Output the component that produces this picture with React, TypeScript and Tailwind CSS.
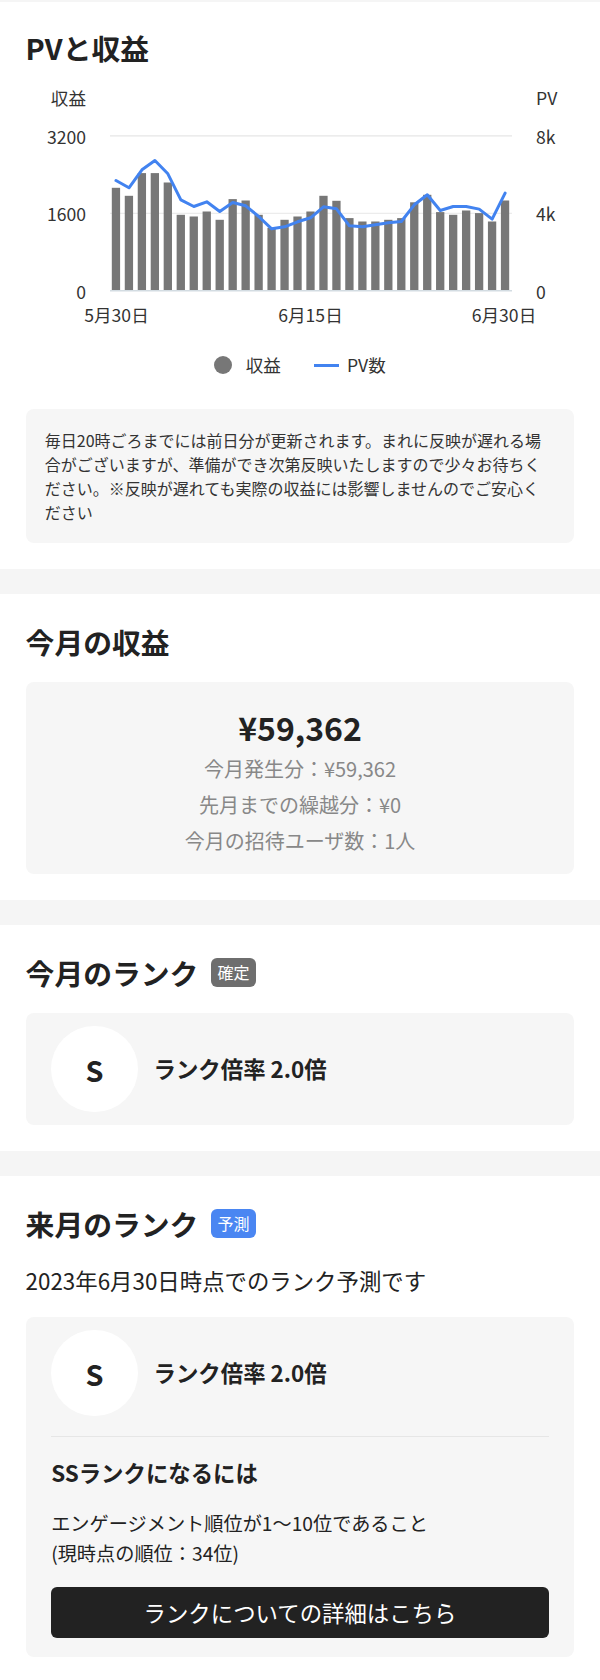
import React from "react";

const bars = [188, 196, 173.3, 173.3, 182.7, 215, 216.7, 211.7, 220, 199.3, 200.7, 215, 228, 220, 216.7, 211.7, 196, 201, 218.3, 221.7, 221.7, 220, 218.3, 202.5, 195, 212.3, 215, 210.7, 213.3, 221.7, 200.7];
const pv = [180.7, 188, 170, 160.7, 174, 200, 206.7, 202, 211.7, 202.7, 206, 216.7, 229, 227, 222, 218, 207, 209, 226, 227, 225, 223, 221.7, 205, 195, 210.7, 206.7, 206.7, 209.3, 219.3, 193.3];

const STEP = 12.97;
const X0 = 116;
const BASE = 290.5;

function Chart() {
  const pts = pv.map((y, i) => `${(X0 + i * STEP).toFixed(2)},${y}`).join(" ");
  return (
    <svg className="block w-[600px] h-[266px] -mx-[25.6px]" viewBox="0 69.2 600 266">
      <g fontSize="17.6" fill="#333">
        <text x="86" y="98" textAnchor="end" dominantBaseline="central">収益</text>
        <text x="536" y="98" textAnchor="start" dominantBaseline="central">PV</text>
        <text x="86" y="137" textAnchor="end" dominantBaseline="central">3200</text>
        <text x="86" y="214" textAnchor="end" dominantBaseline="central">1600</text>
        <text x="86" y="292" textAnchor="end" dominantBaseline="central">0</text>
        <text x="536" y="137" textAnchor="start" dominantBaseline="central">8k</text>
        <text x="536" y="214" textAnchor="start" dominantBaseline="central">4k</text>
        <text x="536" y="292" textAnchor="start" dominantBaseline="central">0</text>
        <text x="116.5" y="314.5" textAnchor="middle" dominantBaseline="central">5月30日</text>
        <text x="310.5" y="314.5" textAnchor="middle" dominantBaseline="central">6月15日</text>
        <text x="504" y="314.5" textAnchor="middle" dominantBaseline="central">6月30日</text>
      </g>
      <line x1="110" x2="512" y1="136" y2="136" stroke="#e6e6e6" strokeWidth="1.2" />
      <line x1="110" x2="512" y1="213.5" y2="213.5" stroke="#ececec" strokeWidth="1.2" />
      {bars.map((top, i) => (
        <rect key={i} x={111.8 + i * STEP} y={top} width="8.3" height={BASE - top} fill="#777777" />
      ))}
      <line x1="110" x2="512" y1="291" y2="291" stroke="#d3dce2" strokeWidth="1.4" />
      <polyline points={pts} fill="none" stroke="#4283f0" strokeWidth="3" strokeLinejoin="round" strokeLinecap="round" />
    </svg>
  );
}

function Band() {
  return <div className="h-[25.6px] bg-[#f5f5f5]" />;
}

function RankRow() {
  return (
    <div className="flex items-center">
      <div className="w-[86.4px] h-[86.4px] rounded-full bg-white flex items-center justify-center text-[28.8px] font-bold text-[#222]">
        S
      </div>
      <div className="ml-[16px] text-[22.4px] font-bold text-[#222]">ランク倍率 2.0倍</div>
    </div>
  );
}

export default function App() {
  return (
    <div className="w-[600px] bg-white text-[#222] font-['Noto_Sans_CJK_JP',sans-serif]">
      <div className="h-[2px] bg-[#f5f5f5]" />
      {/* Section 1 */}
      <section className="px-[25.6px] pt-[24px] pb-[25.6px]">
        <h2 className="text-[28.8px] leading-[43.2px] font-bold">PVと収益</h2>
        <Chart />
        <div className="mt-[17px] h-[26px] flex items-center justify-center text-[17.6px] text-[#333]">
          <span className="w-[17.6px] h-[17.6px] rounded-full bg-[#777777]" />
          <span className="ml-[14px]">収益</span>
          <span className="ml-[33px] w-[25px] h-[3px] bg-[#4283f0]" />
          <span className="ml-[8px]">PV数</span>
        </div>
        <div className="mt-[30.4px] bg-[#f6f6f6] rounded-[8px] pt-[19.2px] pb-[19.2px] pl-[19.2px] pr-[28px] text-[16px] leading-[24px] text-[#333]">
          毎日20時ごろまでには前日分が更新されます。まれに反映が遅れる場合がございますが、準備ができ次第反映いたしますので少々お待ちください。※反映が遅れても実際の収益には影響しませんのでご安心ください
        </div>
      </section>
      <Band />
      {/* Section 2 */}
      <section className="px-[25.6px] pt-[25.6px] pb-[25.6px]">
        <h2 className="text-[28.8px] leading-[43.2px] font-bold">今月の収益</h2>
        <div className="mt-[19.2px] bg-[#f6f6f6] rounded-[8px] pt-[26px] pb-[15px] text-center">
          <div className="text-[32px] leading-[38px] font-bold text-[#222]">¥59,362</div>
          <div className="mt-[5px] text-[20px] leading-[36px] text-[#888]">今月発生分：¥59,362</div>
          <div className="text-[20px] leading-[36px] text-[#888]">先月までの繰越分：¥0</div>
          <div className="text-[20px] leading-[36px] text-[#888]">今月の招待ユーザ数：1人</div>
        </div>
      </section>
      <Band />
      {/* Section 3 */}
      <section className="px-[25.6px] pt-[25.6px] pb-[25.6px]">
        <div className="flex items-center h-[43.2px]">
          <h2 className="text-[28.8px] leading-[43.2px] font-bold">今月のランク</h2>
          <span className="ml-[12.8px] h-[29px] px-[6.4px] rounded-[6px] bg-[#6e6e6e] text-white text-[16px] leading-[29px]">確定</span>
        </div>
        <div className="mt-[19.2px] bg-[#f6f6f6] rounded-[8px] py-[12.8px] px-[25.6px]">
          <RankRow />
        </div>
      </section>
      <Band />
      {/* Section 4 */}
      <section className="px-[25.6px] pt-[25.6px] pb-[25.6px]">
        <div className="flex items-center h-[43.2px]">
          <h2 className="text-[28.8px] leading-[43.2px] font-bold">来月のランク</h2>
          <span className="ml-[12.8px] h-[29px] px-[6.4px] rounded-[6px] bg-[#4a86f2] text-white text-[16px] leading-[29px]">予測</span>
        </div>
        <p className="mt-[19.2px] text-[22.4px] leading-[33.6px] text-[#222]">2023年6月30日時点でのランク予測です</p>
        <div className="mt-[19.2px] bg-[#f6f6f6] rounded-[8px] pt-[12.8px] pb-[19.2px] px-[25.6px]">
          <RankRow />
          <div className="mt-[19.2px] h-[1.6px] bg-[#e6e6e6]" />
          <div className="mt-[19.2px] text-[22.4px] leading-[33.6px] font-bold text-[#222]">SSランクになるには</div>
          <div className="mt-[18px] text-[19.2px] leading-[30px] text-[#222]">
            <div>エンゲージメント順位が1〜10位であること</div>
            <div>(現時点の順位：34位)</div>
          </div>
          <button className="mt-[19px] w-full h-[51.2px] rounded-[6px] bg-[#222] text-white text-[22.4px] flex items-center justify-center">
            ランクについての詳細はこちら
          </button>
        </div>
      </section>
    </div>
  );
}
